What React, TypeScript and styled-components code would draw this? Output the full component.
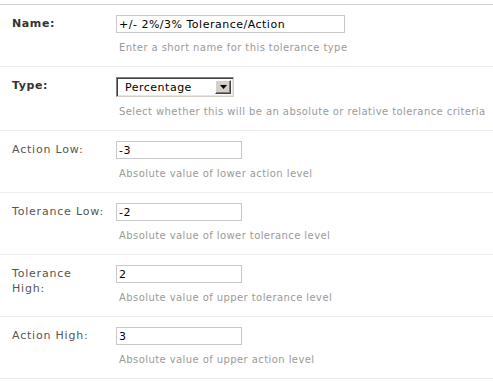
import styled, { createGlobalStyle } from 'styled-components';

const GlobalStyle = createGlobalStyle`
  html, body {
    margin: 0;
    padding: 0;
    background: #fff;
  }
  body {
    font-family: "DejaVu Sans", Verdana, sans-serif;
  }
`;

interface Field {
  label: string;
  strong?: boolean;
  value: string;
  help: string;
  wide?: boolean;
  select?: boolean;
}

const fields: Field[] = [
  {
    label: 'Name:',
    strong: true,
    value: '+/- 2%/3% Tolerance/Action',
    help: 'Enter a short name for this tolerance type',
    wide: true,
  },
  {
    label: 'Type:',
    strong: true,
    value: 'Percentage',
    help: 'Select whether this will be an absolute or relative tolerance criteria',
    select: true,
  },
  { label: 'Action Low:', value: '-3', help: 'Absolute value of lower action level' },
  { label: 'Tolerance Low:', value: '-2', help: 'Absolute value of lower tolerance level' },
  { label: 'Tolerance High:', value: '2', help: 'Absolute value of upper tolerance level' },
  { label: 'Action High:', value: '3', help: 'Absolute value of upper action level' },
];

const App: React.FC = () => {
  return (
    <Wrap>
      <GlobalStyle />
      <Form>
        {fields.map((f) => (
          <Row key={f.label}>
            <Label $strong={f.strong}>{f.label}</Label>
            <FieldCell>
              {f.select ? (
                <Select>
                  <SelectText>{f.value}</SelectText>
                  <SelectBtn>
                    <svg width="7" height="4" viewBox="0 0 7 4">
                      <path d="M0 0h7L3.5 4z" fill="#000" />
                    </svg>
                  </SelectBtn>
                </Select>
              ) : (
                <Input $wide={f.wide} defaultValue={f.value} />
              )}
              <Help>{f.help}</Help>
            </FieldCell>
          </Row>
        ))}
      </Form>
    </Wrap>
  );
};

const Wrap = styled.div`
  width: 493px;
  padding-top: 4px;
`;

const Form = styled.div`
  display: flex;
  flex-direction: column;
  border-top: 1px solid #cfcfcf;
  border-bottom: 1px solid #ececec;
`;

const Row = styled.div`
  display: flex;
  padding: 10px 0 12px 12px;
  & + & {
    border-top: 1px solid #ececec;
  }
`;

const Label = styled.div<{ $strong?: boolean }>`
  width: 93px;
  flex-shrink: 0;
  margin-right: 11px;
  padding-top: 1px;
  font-size: 11px;
  line-height: 15px;
  letter-spacing: ${({ $strong }) => ($strong ? '0.6px' : '0.8px')};
  font-weight: ${({ $strong }) => ($strong ? 700 : 400)};
  color: ${({ $strong }) => ($strong ? '#333' : '#555')};
`;

const FieldCell = styled.div`
  display: flex;
  flex-direction: column;
  align-items: flex-start;
`;

const Input = styled.input<{ $wide?: boolean }>`
  box-sizing: border-box;
  width: ${({ $wide }) => ($wide ? '229px' : '126px')};
  height: 18px;
  margin: 0;
  padding: 0 2px;
  border: 1px solid #c8c8c8;
  font-family: "DejaVu Sans", Verdana, sans-serif;
  font-size: 11px;
  letter-spacing: 0.5px;
  color: #000;
  background: #fff;
  outline: none;
`;

const Select = styled.div`
  box-sizing: border-box;
  width: 118px;
  height: 20px;
  display: flex;
  align-items: center;
  justify-content: space-between;
  border: 1px solid;
  border-color: #808080 #d4d0c8 #d4d0c8 #808080;
  box-shadow: inset 1px 1px #404040, inset -1px -1px #e8e6e0;
  background: #fff;
  padding: 2px 2px 2px 8px;
`;

const SelectText = styled.span`
  font-size: 11px;
  letter-spacing: 0.5px;
  color: #000;
`;

const SelectBtn = styled.span`
  box-sizing: border-box;
  width: 16px;
  height: 14px;
  display: flex;
  align-items: center;
  justify-content: center;
  background: #d4d0c8;
  border: 1px solid;
  border-color: #fff #404040 #404040 #fff;
  box-shadow: inset -1px -1px #808080;
`;

const Help = styled.div`
  margin-top: 9px;
  padding-left: 3px;
  font-size: 10px;
  line-height: 12px;
  letter-spacing: 0.42px;
  color: #9a9a9a;
  white-space: nowrap;
`;

export default App;
